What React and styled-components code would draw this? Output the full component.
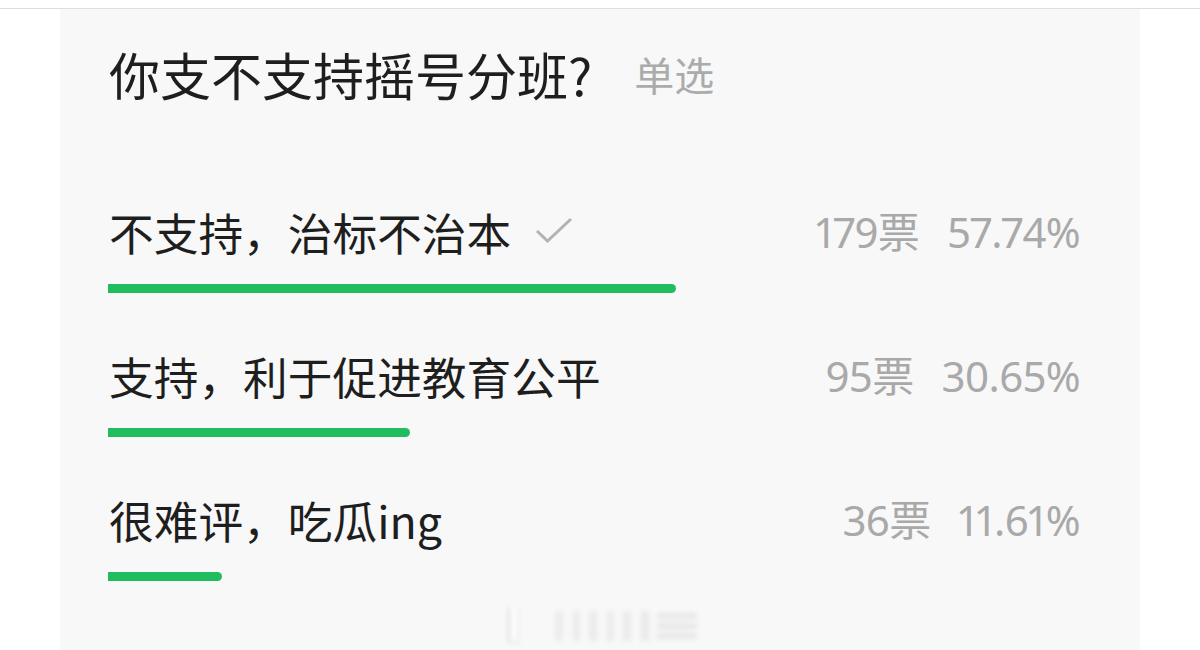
import React from "react";
import styled, { createGlobalStyle } from "styled-components";

const options = [
  { label: "不支持，治标不治本", votes: 179, pct: 57.74, chosen: true },
  { label: "支持，利于促进教育公平", votes: 95, pct: 30.65 },
  { label: "很难评，吃瓜ing", votes: 36, pct: 11.61 },
];

export default function App() {
  return (
    <>
      <GlobalStyle />
      <Page>
        <TopRule />
        <Card>
          <TitleRow>
            <Title>你支不支持摇号分班?</Title>
            <Kind>单选</Kind>
          </TitleRow>

          <OptionList>
            {options.map((opt) => (
              <Option key={opt.label}>
                <OptionRow>
                  <Label>
                    {opt.label}
                    {opt.chosen && (
                      <Check viewBox="0 0 38 26">
                        <path
                          d="M2 14 L12.5 24 L36 2"
                          fill="none"
                          stroke="#b3b3b3"
                          strokeWidth="3"
                        />
                      </Check>
                    )}
                  </Label>
                  <Stats>
                    <span>{opt.votes}票</span>
                    <span>{opt.pct.toFixed(2)}%</span>
                  </Stats>
                </OptionRow>
                <Track>
                  <Bar style={{ width: `${opt.pct}%` }} />
                </Track>
              </Option>
            ))}
          </OptionList>

          <Watermark viewBox="0 0 200 44">
            <defs>
              <filter id="blur" x="-20%" y="-20%" width="140%" height="140%">
                <feGaussianBlur stdDeviation="2.5" />
              </filter>
            </defs>
            <g filter="url(#blur)">
              <rect x="2" y="4" width="12" height="36" fill="#e6e6e6" />
              <rect x="6" y="4" width="6" height="34" fill="#ffffff" />
              <rect x="50" y="8" width="8" height="30" fill="#ececec" />
              <rect x="68" y="8" width="7" height="30" fill="#ebebeb" />
              <rect x="84" y="8" width="8" height="30" fill="#eaeaea" />
              <rect x="102" y="8" width="7" height="30" fill="#ebebeb" />
              <rect x="118" y="8" width="8" height="30" fill="#eaeaea" />
              <rect x="136" y="8" width="8" height="30" fill="#e9e9e9" />
              <rect x="152" y="10" width="40" height="6" fill="#e6e6e6" />
              <rect x="152" y="20" width="40" height="6" fill="#e6e6e6" />
              <rect x="152" y="30" width="40" height="6" fill="#e6e6e6" />
            </g>
          </Watermark>
        </Card>
      </Page>
    </>
  );
}

const GlobalStyle = createGlobalStyle`
  html, body {
    margin: 0;
    padding: 0;
    background: #ffffff;
  }
  body {
    font-family: "Noto Sans CJK SC", "Noto Sans", sans-serif;
  }
`;

const Page = styled.div`
  width: 1200px;
  height: 650px;
  overflow: hidden;
  padding-top: 8px;
  box-sizing: border-box;
`;

const TopRule = styled.div`
  height: 1px;
  background: #dedede;
`;

const Card = styled.div`
  margin: 0 60px;
  height: 700px;
  background: #f8f8f8;
  padding: 35px 60px 0 48px;
  display: flex;
  flex-direction: column;
`;

const TitleRow = styled.div`
  display: flex;
  align-items: center;
  height: 60px;
  padding-left: 1px;
`;

const Title = styled.div`
  font-size: 51px;
  font-weight: 400;
  color: #1e1e1e;
  line-height: 60px;
`;

const Kind = styled.div`
  margin-left: 42px;
  font-size: 40px;
  color: #ababab;
  line-height: 60px;
`;

const OptionList = styled.div`
  margin-top: 98px;
  display: flex;
  flex-direction: column;
  gap: 53px;
`;

const Option = styled.div`
  display: flex;
  flex-direction: column;
`;

const OptionRow = styled.div`
  display: flex;
  align-items: center;
  justify-content: space-between;
  height: 60px;
`;

const Label = styled.div`
  display: flex;
  align-items: center;
  padding-left: 1px;
  font-size: 44.7px;
  color: #1e1e1e;
  line-height: 60px;
`;

const Check = styled.svg`
  width: 38px;
  height: 26px;
  margin-left: 24px;
  margin-top: -4px;
`;

const Stats = styled.div`
  display: flex;
  gap: 28px;
  font-family: "Noto Sans", "Noto Sans CJK SC", sans-serif;
  font-variant-numeric: proportional-nums;
  font-size: 42px;
  color: #a9a9a9;
  line-height: 60px;
  letter-spacing: -0.7px;
`;

const Track = styled.div`
  margin-top: 22px;
  margin-right: -12px;
  height: 9px;
`;

const Bar = styled.div`
  height: 100%;
  background: #20bd60;
  border-radius: 0 5px 5px 0;
`;

const Watermark = styled.svg`
  align-self: flex-start;
  margin: 22px 0 0 397px;
  width: 200px;
  height: 44px;
`;
